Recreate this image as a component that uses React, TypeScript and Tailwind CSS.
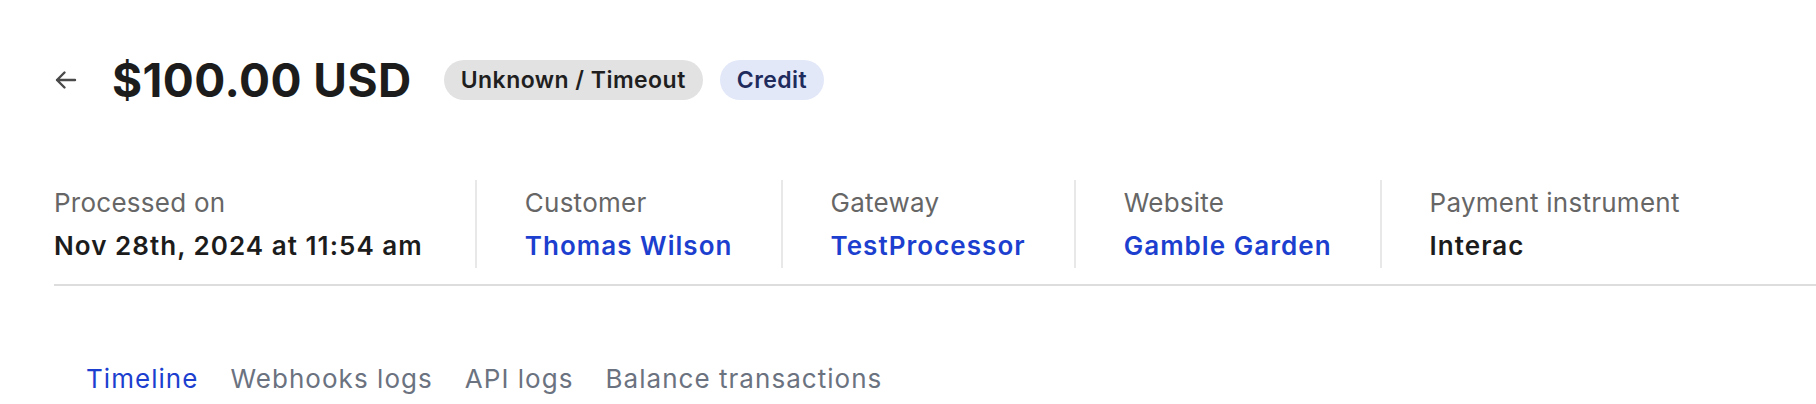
import { useState } from "react";

const details = [
  { label: "Processed on", value: "Nov 28th, 2024 at 11:54 am", link: false },
  { label: "Customer", value: "Thomas Wilson", link: true },
  { label: "Gateway", value: "TestProcessor", link: true },
  { label: "Website", value: "Gamble Garden", link: true },
  { label: "Payment instrument", value: "Interac", link: false },
];

const tabs = ["Timeline", "Webhooks logs", "API logs", "Balance transactions"];

export default function App() {
  const [active, setActive] = useState("Timeline");

  return (
    <div className="min-h-screen bg-white pl-[54px] pt-[60px] font-['Inter',sans-serif] text-[#1c1c1c]">
      <div className="flex h-10 items-center">
        <button aria-label="Back" className="flex h-10 w-[24px] items-center justify-center text-[#4a4a4a]">
          <svg width="28" height="28" viewBox="0 0 24 24" fill="none" stroke="currentColor" strokeWidth="2.4" strokeLinecap="round" strokeLinejoin="round">
            <path d="M10.5 19.5 3 12m0 0 7.5-7.5M3 12h18" />
          </svg>
        </button>
        <h1 className="ml-[34px] text-[46px] leading-none font-bold tracking-[0.01em]">$100.00 USD</h1>
        <span className="ml-[32px] flex h-10 items-center rounded-full bg-[#e2e2e2] px-[17px] text-[23px] font-semibold tracking-[0.02em] text-[#1f1f1f]">
          Unknown / Timeout
        </span>
        <span className="ml-[17px] flex h-10 items-center rounded-full bg-[#e2e8f8] px-[17px] text-[23px] font-semibold tracking-[0.02em] text-[#1e2b5c]">
          Credit
        </span>
      </div>

      <div className="mt-[80px] flex border-b-2 border-[#dddddd] pb-[16px]">
        {details.map((d, i) => (
          <div
            key={d.label}
            className={
              i === 0
                ? "flex h-[88px] flex-col justify-center pr-[52px]"
                : "flex h-[88px] flex-col justify-center border-l-2 border-[#e8e8e8] px-[48px]"
            }
          >
            <div className="text-[26px] leading-[34px] tracking-[0.01em] text-[#666666]">{d.label}</div>
            <div
              className={
                d.link
                  ? "mt-[10px] text-[26px] leading-[32px] font-semibold tracking-[0.04em] text-[#1c3fcf]"
                  : "mt-[10px] text-[26px] leading-[32px] font-semibold tracking-[0.04em] text-[#1c1c1c]"
              }
            >
              {d.value}
            </div>
          </div>
        ))}
      </div>

      <div className="mt-[76px] flex pl-4">
        {tabs.map((t) => (
          <button
            key={t}
            onClick={() => setActive(t)}
            className={
              t === active
                ? "px-4 text-[26px] leading-[34px] tracking-[0.04em] text-[#1c3fcf]"
                : "px-4 text-[26px] leading-[34px] tracking-[0.04em] text-[#6b7280]"
            }
          >
            {t}
          </button>
        ))}
      </div>
    </div>
  );
}
